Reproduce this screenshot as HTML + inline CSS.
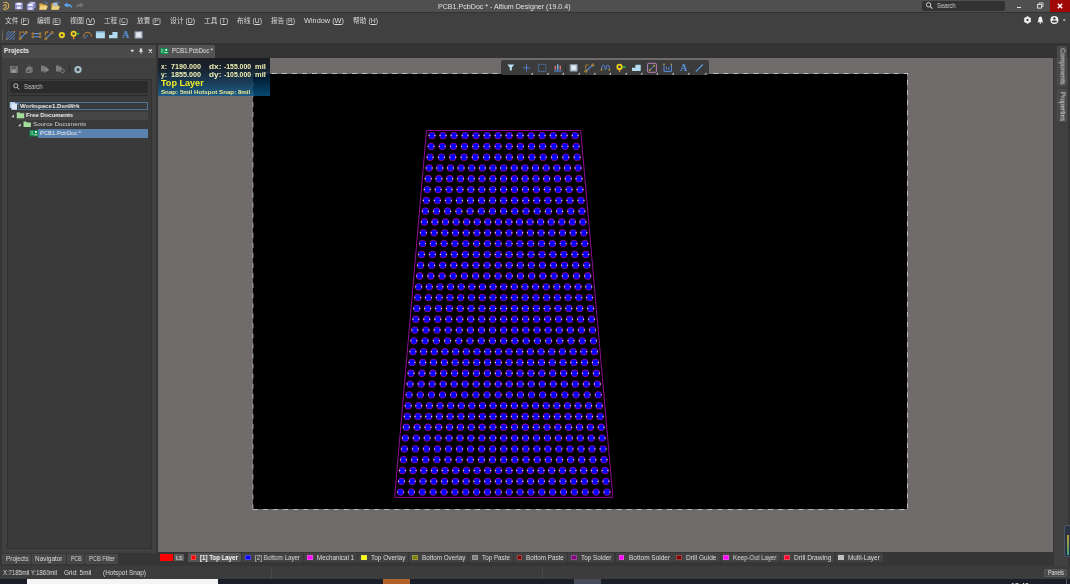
<!DOCTYPE html>
<html lang="zh-CN"><head><meta charset="utf-8"><title>PCB1.PcbDoc * - Altium Designer (19.0.4)</title>
<style>
html,body{margin:0;padding:0;background:#3a3a3a;}
body{width:1070px;height:584px;position:relative;overflow:hidden;font-family:"Liberation Sans","Noto Sans CJK SC",sans-serif;}
#app div,#app svg,#app span.t{position:absolute;display:block;}
#app span.t u{text-decoration-thickness:0.6px;text-underline-offset:0.6px;}
#app span.t{white-space:pre;transform-origin:0 50%;will-change:transform;}
</style></head><body><div id="app" style="position:absolute;left:0;top:0;width:1070px;height:584px;overflow:hidden">
<div style="left:0px;top:0px;width:1070px;height:12px;background:#4f4f4f;"></div>
<div style="left:0px;top:12px;width:1070px;height:1px;background:#333333;"></div>
<div style="left:0px;top:13px;width:1070px;height:30px;background:#404040;"></div>
<div style="left:0px;top:43px;width:1070px;height:541px;background:#363636;"></div>
<div style="left:2px;top:58px;width:154px;height:495px;background:#404040;"></div>
<div style="left:157px;top:43px;width:913px;height:15px;background:#333333;"></div>
<div style="left:0px;top:43px;width:157px;height:2px;background:#333333;"></div>
<div style="left:156px;top:43px;width:2px;height:15px;background:#333333;"></div>
<div style="left:1054px;top:58px;width:14px;height:508px;background:#404040;"></div>
<div style="left:158px;top:58px;width:895px;height:494px;background:#6f6b6a;"></div>
<div style="left:253.4px;top:74px;width:653.6px;height:435px;background:#000000;"></div>
<svg style="left:0px;top:0px;" width="1070" height="584" viewBox="0 0 1070 584"><line x1="253" y1="73.5" x2="908" y2="73.5" stroke="#bdbdbd" stroke-width="1" stroke-dasharray="5 5.03" stroke-dashoffset="1.16"/><line x1="907.5" y1="73" x2="907.5" y2="510" stroke="#bdbdbd" stroke-width="1" stroke-dasharray="5 5.08" stroke-dashoffset="3"/><line x1="253" y1="509.5" x2="908" y2="509.5" stroke="#b8b8b8" stroke-width="1" stroke-dasharray="5 5.1" stroke-dashoffset="0.1"/><line x1="252.9" y1="73" x2="252.9" y2="510" stroke="#a8a8a8" stroke-width="1" stroke-dasharray="5 5.06" stroke-dashoffset="1.1"/></svg>
<div style="left:922px;top:0.5px;width:83px;height:10.5px;background:#323232;border-radius:2px;"></div>
<svg style="left:925px;top:1px;" width="9" height="9" viewBox="0 0 9 9"><circle cx="3.6" cy="3.8" r="2.2" fill="none" stroke="#d0d0d0" stroke-width="1"/><path d="M5.2 5.4 L7.2 7.6" stroke="#d0d0d0" stroke-width="1.1"/></svg>
<div style="left:1017px;top:7px;width:4px;height:1.2px;background:#e8e8e8;"></div>
<svg style="left:1035px;top:1px;" width="10" height="10" viewBox="0 0 10 10"><rect x="2.5" y="3.5" width="4" height="3.6" fill="none" stroke="#e0e0e0" stroke-width="0.9"/><path d="M4 3.2 V2 H8 V5.6 H6.8" fill="none" stroke="#e0e0e0" stroke-width="0.9"/></svg>
<div style="left:1050px;top:0px;width:20px;height:12.2px;background:#a00808;"></div>
<svg style="left:1055px;top:1px;" width="10" height="10" viewBox="0 0 10 10"><path d="M2.8 2.8 L7.2 7.2 M7.2 2.8 L2.8 7.2" stroke="#ffffff" stroke-width="1.4"/></svg>
<div style="left:2px;top:45px;width:154px;height:13px;background:#4a4a4a;"></div>
<div style="left:7px;top:78.5px;width:145px;height:470px;background:#3a3a3a;box-sizing:border-box;border:1px solid #313131;"></div>
<div style="left:10px;top:81px;width:138px;height:11.5px;background:#2b2b2b;border-radius:2px;"></div>
<svg style="left:12px;top:82px;" width="9" height="9" viewBox="0 0 9 9"><circle cx="3.8" cy="3.8" r="2.1" fill="none" stroke="#c8c8c8" stroke-width="0.9"/><path d="M5.3 5.4 L7.3 7.5" stroke="#c8c8c8" stroke-width="1"/></svg>
<div style="left:10px;top:95.3px;width:138px;height:0.8px;background:#2a2a2a;"></div>
<div style="left:18px;top:102.4px;width:130px;height:7.8px;background:#3a3a3a;box-sizing:border-box;border:0.8px solid #4e7298;"></div>
<div style="left:16px;top:111.6px;width:132px;height:8px;background:#454545;"></div>
<div style="left:38px;top:129px;width:110px;height:8.6px;background:#5a82ae;"></div>
<div style="left:2px;top:553.5px;width:29px;height:10px;background:#454545;box-sizing:border-box;border:0.5px solid #494949;border-radius:1px;"></div>
<div style="left:32px;top:553.5px;width:34px;height:10px;background:#454545;box-sizing:border-box;border:0.5px solid #494949;border-radius:1px;"></div>
<div style="left:67px;top:553.5px;width:16.5px;height:10px;background:#454545;box-sizing:border-box;border:0.5px solid #494949;border-radius:1px;"></div>
<div style="left:85px;top:553.5px;width:33px;height:10px;background:#454545;box-sizing:border-box;border:0.5px solid #494949;border-radius:1px;"></div>
<div style="left:158px;top:45px;width:57px;height:13.2px;background:#535353;border-radius:1.5px 1.5px 0 0;"></div>
<div style="left:158px;top:58.3px;width:112px;height:38px;background:linear-gradient(180deg,rgba(4,10,18,0.8) 0%,rgba(4,14,26,0.8) 22%,rgba(4,40,68,0.8) 55%,rgba(8,90,144,0.8) 100%);"></div>
<div style="left:1057px;top:46px;width:10px;height:40px;background:#474747;border-radius:1.5px;box-sizing:border-box;border:0.6px solid #505050;"></div>
<div style="left:1057px;top:89.4px;width:10px;height:33px;background:#474747;border-radius:1.5px;box-sizing:border-box;border:0.6px solid #505050;"></div>
<div style="left:159.8px;top:554.3px;width:13.4px;height:7px;background:#ff0000;"></div>
<div style="left:174px;top:554.3px;width:10px;height:7px;background:#5c5c5c;"></div>
<div style="left:187.6px;top:552.8px;width:53.80000000000001px;height:9.2px;background:#555555;border-radius:1px;"></div>
<div style="left:190.5px;top:554.5px;width:5.9px;height:5.6px;background:#ff0000;box-sizing:border-box;border:0.4px solid rgba(200,200,200,0.35);"></div>
<div style="left:242.2px;top:552.8px;width:61.19999999999999px;height:9.2px;background:#424242;border-radius:1px;"></div>
<div style="left:245.1px;top:554.5px;width:5.9px;height:5.6px;background:#0000ff;box-sizing:border-box;border:0.4px solid rgba(200,200,200,0.35);"></div>
<div style="left:304.2px;top:552.8px;width:53.19999999999999px;height:9.2px;background:#424242;border-radius:1px;"></div>
<div style="left:307.1px;top:554.5px;width:5.9px;height:5.6px;background:#ff00ff;box-sizing:border-box;border:0.4px solid rgba(200,200,200,0.35);"></div>
<div style="left:358.4px;top:552.8px;width:50.0px;height:9.2px;background:#424242;border-radius:1px;"></div>
<div style="left:361.3px;top:554.5px;width:5.9px;height:5.6px;background:#ffff00;box-sizing:border-box;border:0.4px solid rgba(200,200,200,0.35);"></div>
<div style="left:408.9px;top:552.8px;width:59.5px;height:9.2px;background:#424242;border-radius:1px;"></div>
<div style="left:411.8px;top:554.5px;width:5.9px;height:5.6px;background:#808000;box-sizing:border-box;border:0.4px solid rgba(200,200,200,0.35);"></div>
<div style="left:469.4px;top:552.8px;width:43.60000000000002px;height:9.2px;background:#424242;border-radius:1px;"></div>
<div style="left:472.3px;top:554.5px;width:5.9px;height:5.6px;background:#808080;box-sizing:border-box;border:0.4px solid rgba(200,200,200,0.35);"></div>
<div style="left:513.6px;top:552.8px;width:53.59999999999991px;height:9.2px;background:#424242;border-radius:1px;"></div>
<div style="left:516.5px;top:554.5px;width:5.9px;height:5.6px;background:#800000;box-sizing:border-box;border:0.4px solid rgba(200,200,200,0.35);"></div>
<div style="left:567.8000000000001px;top:552.8px;width:46.59999999999991px;height:9.2px;background:#424242;border-radius:1px;"></div>
<div style="left:570.7px;top:554.5px;width:5.9px;height:5.6px;background:#800080;box-sizing:border-box;border:0.4px solid rgba(200,200,200,0.35);"></div>
<div style="left:615.6px;top:552.8px;width:57.39999999999998px;height:9.2px;background:#424242;border-radius:1px;"></div>
<div style="left:618.5px;top:554.5px;width:5.9px;height:5.6px;background:#ff00ff;box-sizing:border-box;border:0.4px solid rgba(200,200,200,0.35);"></div>
<div style="left:673.2px;top:552.8px;width:46.59999999999991px;height:9.2px;background:#424242;border-radius:1px;"></div>
<div style="left:676.1px;top:554.5px;width:5.9px;height:5.6px;background:#800000;box-sizing:border-box;border:0.4px solid rgba(200,200,200,0.35);"></div>
<div style="left:720.5px;top:552.8px;width:59.69999999999993px;height:9.2px;background:#424242;border-radius:1px;"></div>
<div style="left:723.4px;top:554.5px;width:5.9px;height:5.6px;background:#ff00ff;box-sizing:border-box;border:0.4px solid rgba(200,200,200,0.35);"></div>
<div style="left:781.2px;top:552.8px;width:53.19999999999993px;height:9.2px;background:#424242;border-radius:1px;"></div>
<div style="left:784.1px;top:554.5px;width:5.9px;height:5.6px;background:#ff002a;box-sizing:border-box;border:0.4px solid rgba(200,200,200,0.35);"></div>
<div style="left:835.5px;top:552.8px;width:47.69999999999993px;height:9.2px;background:#424242;border-radius:1px;"></div>
<div style="left:838.4px;top:554.5px;width:5.9px;height:5.6px;background:#c0c0c0;box-sizing:border-box;border:0.4px solid rgba(200,200,200,0.35);"></div>
<div style="left:0px;top:565.6px;width:1070px;height:13.4px;background:#3c3c3c;"></div>
<div style="left:271px;top:567px;width:0.7px;height:11px;background:#4a4a4a;"></div>
<div style="left:541.5px;top:567px;width:0.7px;height:11px;background:#4a4a4a;"></div>
<div style="left:1044px;top:569.4px;width:22.5px;height:8px;background:#4a4a4a;border-radius:1.5px;box-sizing:border-box;border:0.6px solid #5a5a5a;"></div>
<div style="left:0px;top:578.8px;width:1070px;height:6px;background:#1b1d29;"></div>
<div style="left:27px;top:578.8px;width:191px;height:6px;background:#f4f4f4;"></div>
<div style="left:382.6px;top:578.8px;width:27.3px;height:6px;background:#b0622a;"></div>
<div style="left:573.8px;top:578.8px;width:27px;height:6px;background:#474a57;"></div>
<div style="left:1066px;top:578.8px;width:0.7px;height:6px;background:#5a5a66;"></div>
<div style="left:1064px;top:524.5px;width:8px;height:32px;background:#2c3444;border-radius:2px;box-sizing:border-box;border:0.7px solid #4a546a;"></div>
<div style="left:1066.8px;top:535px;width:1.8px;height:20px;background:linear-gradient(180deg,#b89a30,#7aa04a 60%,#2aa08a);"></div>
<svg style="left:0px;top:0px;" width="90" height="12" viewBox="0 0 90 12"><path d="M3.8 2.5 L6.6 2.3 L8.6 4.2 V7.6 L5.8 9.7 L3.8 9.3 M3.6 5.9 C4.4 4.1 6.4 4.2 6.4 6 C6.4 7.4 5.2 8.1 4 8.2" fill="none" stroke="#c2a254" stroke-width="1.15" stroke-linecap="round" stroke-linejoin="round"/><rect x="15" y="2.4" width="7.9" height="7" rx="0.6" fill="#8f8fd2"/><rect x="16.6" y="2.9" width="4.7" height="2.3" fill="#f4f4ff"/><rect x="16.9" y="6.6" width="4.1" height="2.4" fill="#e4e4fa"/><rect x="29" y="1.7" width="6.7" height="6.4" rx="0.5" fill="#8484c4"/><rect x="30.3" y="2.3" width="4" height="1.6" fill="#e0e0f4"/><rect x="26.9" y="3.4" width="7.2" height="6.9" rx="0.6" fill="#9494d8"/><rect x="28.3" y="3.9" width="4.4" height="2.1" fill="#f4f4ff"/><rect x="28.6" y="7.4" width="3.8" height="2.4" fill="#e4e4fa"/><path d="M39.3 3.6 H42.4 L43.2 4.6 H46.4 V9.6 H39.3 Z" fill="#d8a848"/><path d="M40.6 5.8 H47.9 L46.4 9.7 H39.3 Z" fill="#f0d080"/><path d="M43.6 2.6 C45 1.2 46.8 1.6 47 3.4 M47 3.6 L46 2.8 M47 3.6 L47.9 2.6" stroke="#5a86c8" stroke-width="0.8" fill="none"/><path d="M51.3 3.6 H54.4 L55.2 4.6 H58.4 V9.6 H51.3 Z" fill="#d8a848"/><rect x="53.2" y="2.6" width="4.4" height="4" fill="#a8bcdc"/><path d="M52.6 6.2 H60.1 L58.6 9.7 H51.3 Z" fill="#f0d080"/><path d="M56.6 2.4 C57.8 1.2 59.4 1.6 59.6 3.2" stroke="#5a86c8" stroke-width="0.8" fill="none"/><path d="M63.8 5 L67.4 2.4 V4 C70.6 3.8 72.4 5.8 72.2 8.6 C71.4 6.8 69.8 6 67.4 6.2 V7.8 Z" fill="#5aa0e8"/><path d="M83.8 5 L80.2 2.4 V4 C77.4 3.8 75.6 5.8 75.8 8.6 C76.6 6.8 78 6 80.2 6.2 V7.8 Z" fill="#747474"/></svg>
<svg style="left:0px;top:0px;" width="1070" height="30" viewBox="0 0 1070 30"><path d="M1027.50 16.30 L1026.05 17.49 L1024.30 18.15 L1024.60 20.00 L1024.30 21.85 L1026.05 22.51 L1027.50 23.70 L1028.95 22.51 L1030.70 21.85 L1030.40 20.00 L1030.70 18.15 L1028.95 17.49 Z" fill="#f2f2f2" stroke="#f2f2f2" stroke-width="0.6" stroke-linejoin="round"/><circle cx="1027.5" cy="20.0" r="1.15" fill="#404040"/><path d="M1040.4 16.6 C1042.3 16.8 1042.3 19.4 1042.5 21 L1043.3 22.3 H1037.5 L1038.3 21 C1038.5 19.4 1038.5 16.8 1040.4 16.6 Z" fill="#f2f2f2"/><circle cx="1040.4" cy="23" r="0.8" fill="#f2f2f2"/><circle cx="1054.4" cy="20.1" r="4" fill="#f2f2f2"/><circle cx="1054.4" cy="18.4" r="1.2" fill="#404040"/><path d="M1051.6 21.4 C1052.6 22.8 1056.2 22.8 1057.2 21.4 C1056.6 20.2 1052.2 20.2 1051.6 21.4Z" fill="#404040"/><path d="M1062.6 19.4 H1065.8 L1064.2 21.2 Z" fill="#d0d0d0"/></svg>
<svg style="left:0px;top:0px;" width="160" height="44" viewBox="0 0 160 44"><rect x="2" y="30.5" width="0.9" height="9.8" fill="#6c6c6c"/><clipPath id="hc"><rect x="6" y="31" width="9" height="9"/></clipPath><g clip-path="url(#hc)"><path d="M0.0 40.4 L10.0 30.4" stroke="#5a8ee0" stroke-width="1"/><path d="M3.0 40.4 L13.0 30.4" stroke="#5a8ee0" stroke-width="1"/><path d="M6.0 40.4 L16.0 30.4" stroke="#5a8ee0" stroke-width="1"/><path d="M9.0 40.4 L19.0 30.4" stroke="#5a8ee0" stroke-width="1"/><path d="M12.0 40.4 L22.0 30.4" stroke="#5a8ee0" stroke-width="1"/></g><circle cx="6.6" cy="39" r="0.7" fill="#d89a2a"/><circle cx="14.4" cy="31.8" r="0.7" fill="#d89a2a"/><path d="M20 36.4 V32.2 H24.6" stroke="#d89a2a" stroke-width="1.2" fill="none" stroke-dasharray="1 0.8"/><path d="M20.4 38.4 L26 32.6" stroke="#5a8ee0" stroke-width="1.1"/><circle cx="20.2" cy="38.6" r="1.1" fill="none" stroke="#d89a2a" stroke-width="0.8"/><circle cx="26.2" cy="32.4" r="1.1" fill="none" stroke="#d89a2a" stroke-width="0.8"/><path d="M33.4 33.6 H39.6 M33.4 36.8 H39.6" stroke="#5a8ee0" stroke-width="1.1"/><circle cx="32.8" cy="33.6" r="0.9" fill="none" stroke="#d89a2a" stroke-width="0.8"/><circle cx="32.8" cy="36.8" r="0.9" fill="none" stroke="#d89a2a" stroke-width="0.8"/><circle cx="40.2" cy="33.6" r="0.9" fill="none" stroke="#d89a2a" stroke-width="0.8"/><circle cx="40.2" cy="36.8" r="0.9" fill="none" stroke="#d89a2a" stroke-width="0.8"/><path d="M45.4 35.4 V32 H49" stroke="#d89a2a" stroke-width="1.4" fill="none" stroke-dasharray="1 0.7"/><path d="M46 38.4 L52 32.8" stroke="#5a8ee0" stroke-width="1.1"/><circle cx="45.8" cy="38.6" r="1.1" fill="none" stroke="#d89a2a" stroke-width="0.8"/><circle cx="52.2" cy="32.6" r="1.1" fill="none" stroke="#d89a2a" stroke-width="0.8"/><circle cx="61.9" cy="35.1" r="2.15" fill="none" stroke="#f0d020" stroke-width="1.9"/><rect x="76" y="33" width="3.2" height="1.5" fill="#30c040"/><rect x="73" y="36" width="1.3" height="3.2" fill="#e88a30"/><circle cx="73.6" cy="33.7" r="2.15" fill="none" stroke="#f0d020" stroke-width="1.7"/><path d="M83.6 37.4 C83.2 31 91 30.6 91.6 36.4" stroke="#d08a3a" stroke-width="1" fill="none"/><path d="M84.4 38.8 L87.8 35" stroke="#5a8ee0" stroke-width="0.9"/><rect x="95.9" y="31.5" width="9" height="6.8" fill="#b4dcf0"/><rect x="95.9" y="31.5" width="9" height="1.1" fill="#7ab0d4"/><path d="M109 38.3 V35 H112.4 V32 H117.5 V38.3 Z" fill="#b4dcf0"/><rect x="134.4" y="31" width="8.4" height="7.8" rx="1.2" fill="#7c8898"/><rect x="135.5" y="32" width="6.2" height="5.8" fill="#c8d2dc"/><rect x="136.6" y="33" width="4" height="3.8" fill="#e4ecf2"/></svg>
<svg style="left:0px;top:0px;" width="180" height="140" viewBox="0 0 180 140"><path d="M130.4 49.8 H134 L132.2 52.4 Z" fill="#e0e0e0"/><path d="M139.8 48.4 H142.2 V51 H143 V51.8 H141.4 V53.8 H140.6 V51.8 H139 V51 H139.8 Z" fill="#e0e0e0"/><path d="M148.8 49.4 L152 52.6 M152 49.4 L148.8 52.6" stroke="#e8e8e8" stroke-width="1.1"/><rect x="10.1" y="66.1" width="7.7" height="7" rx="0.5" fill="#7c7c7c"/><rect x="11.6" y="66.6" width="4.6" height="2.2" fill="#5a5a5a"/><rect x="11.9" y="70.2" width="4" height="2.4" fill="#9a9a9a"/><path d="M28.6 65.2 L32.8 67.4 V72 L30 73 V68.6 Z" fill="#6c6c6c"/><path d="M25.8 68.4 L28.6 66.2 L31.2 68.4 V73.1 H25.8 Z" fill="#7c7c7c"/><rect x="27.2" y="69.8" width="2.4" height="2" fill="#4a4a4a"/><path d="M41 65.6 H43.6 L44.2 66.6 H46.6 V71.6 H41 Z" fill="#7c7c7c"/><circle cx="47" cy="69.8" r="1.7" fill="#8a8a8a"/><path d="M45.8 71 L44.2 73" stroke="#8a8a8a" stroke-width="0.9"/><path d="M56 65.6 H58.6 L59.2 66.6 H61.6 V71.6 H56 Z" fill="#7c7c7c"/><circle cx="62.4" cy="70.8" r="1.8" fill="#3a3a3a" stroke="#8a8a8a" stroke-width="0.9"/><rect x="69" y="65.1" width="0.8" height="8.4" fill="#2a2a2a"/><circle cx="78" cy="69.6" r="2.6" fill="none" stroke="#a8c0cc" stroke-width="2.1"/><rect x="9.8" y="102" width="5.4" height="6" fill="#a8c8ec"/><rect x="11.4" y="103.4" width="5.6" height="6.4" fill="#dce8f8"/><path d="M14.6 102.4 H18 V105 Z" fill="#7aa0d0"/><path d="M11.2 117.2 H14 V114.4 Z" fill="#d0d0d0"/><path d="M16.8 112.4 H19.6 L20.2 113.3 H24.2 V118.2 H16.8 Z" fill="#a4dc9c"/><path d="M18 126.2 H20.8 V123.4 Z" fill="#d0d0d0"/><path d="M23.5 121.5 H26.3 L26.9 122.4 H30.9 V127.1 H23.5 Z" fill="#a4dc9c"/><rect x="29.6" y="130" width="8.6" height="6.4" fill="#0c8a4c"/><rect x="30.6" y="130.8" width="0.8" height="4.2" fill="#7ac8a0"/><rect x="32" y="130.8" width="0.8" height="4.2" fill="#7ac8a0"/><rect x="35" y="131" width="1.8" height="1.8" fill="#ffffff"/><rect x="33.8" y="134.4" width="3.6" height="0.9" fill="#d8f0e0"/><rect x="160.2" y="48" width="8.2" height="6.2" fill="#0c8a4c"/><rect x="161.1" y="48.8" width="0.8" height="4" fill="#7ac8a0"/><rect x="162.5" y="48.8" width="0.8" height="4" fill="#7ac8a0"/><rect x="165.3" y="49" width="1.8" height="1.8" fill="#ffffff"/><rect x="164.2" y="52.2" width="3.4" height="0.9" fill="#d8f0e0"/></svg>
<div style="left:500.8px;top:60.2px;width:208px;height:15.2px;background:#3b3b3b;border-radius:2px;"></div>
<svg style="left:0px;top:0px;" width="720" height="80" viewBox="0 0 720 80"><path d="M507.3 64.6 H514.3 L511.8 67.6 V70.6 H509.8 V67.6 Z" fill="#b8e2f2"/><path d="M526.5 64.1 V71.5 M522.8 67.8 H530.2" stroke="#5a8ee0" stroke-width="0.75"/><rect x="538.3" y="64.3" width="7.6" height="7.2" fill="none" stroke="#5a8ee0" stroke-width="0.75" stroke-dasharray="1.5 0.8"/><rect x="554.6" y="65.8" width="1.3" height="3.8" fill="#e87a7a"/><rect x="557" y="64.4" width="1.5" height="5.2" fill="#78b4ec"/><rect x="559.6" y="65.8" width="1.3" height="3.8" fill="#e87a7a"/><rect x="554.2" y="70.4" width="7.2" height="1.1" fill="#5a8ee0"/><rect x="565.2" y="62.6" width="0.8" height="10.6" fill="#2c2c2c"/><rect x="569.6" y="63.9" width="8.2" height="7.8" rx="1.2" fill="#7c8c9c"/><rect x="570.7" y="64.9" width="6" height="5.8" fill="#c8d2dc"/><rect x="571.8" y="65.9" width="3.8" height="3.8" fill="#e4ecf2"/><path d="M585.6 68.4 V65 H588.6" stroke="#d89a2a" stroke-width="1.2" fill="none" stroke-dasharray="1 0.7"/><path d="M586 71 L592.6 65.2" stroke="#5a8ee0" stroke-width="1.1"/><circle cx="585.8" cy="71.2" r="1.1" fill="none" stroke="#d89a2a" stroke-width="0.8"/><circle cx="592.8" cy="65" r="1.1" fill="none" stroke="#d89a2a" stroke-width="0.8"/><path d="M601.6 69.6 C601.6 64 604.6 64 604.8 67.4 C605 70.4 606.2 70.4 606.4 67.4 C606.6 64 609.4 64 609.4 69.6" stroke="#5a8ee0" stroke-width="1" fill="none"/><circle cx="601.4" cy="69.8" r="0.9" fill="#d89a2a"/><circle cx="609.4" cy="69.8" r="0.9" fill="#d89a2a"/><rect x="622" y="66.2" width="3.6" height="1.5" fill="#30c040"/><rect x="618.9" y="69.2" width="1.3" height="3" fill="#e88a30"/><circle cx="619.5" cy="66.9" r="2.2" fill="none" stroke="#f0d020" stroke-width="1.8"/><path d="M632 71 V67.8 H635.4 V64.7 H640.7 V71 Z" fill="#b4dcf0"/><rect x="647.6" y="63.3" width="8.8" height="9" rx="1" fill="none" stroke="#c48cc4" stroke-width="0.9"/><path d="M649.8 70 L654.2 65.6" stroke="#5a8ee0" stroke-width="1"/><circle cx="649.8" cy="70" r="0.9" fill="#d89a2a"/><circle cx="654.2" cy="65.6" r="0.9" fill="#d89a2a"/><path d="M664 64.4 V71.4 H671.4 V64.4" stroke="#5a8ee0" stroke-width="1" fill="none"/><path d="M666.6 66.6 V70 M668.8 66.6 V70" stroke="#5a8ee0" stroke-width="0.8"/><circle cx="664" cy="64.2" r="0.8" fill="#d89a2a"/><circle cx="671.4" cy="64.2" r="0.8" fill="#d89a2a"/><path d="M695.8 71.6 L702.8 64.5" stroke="#5a9ae8" stroke-width="1.2"/><path d="M532.8 74.4 H530.8 L532.8 72.4 Z" fill="#e4e4e4"/><path d="M548.5 74.4 H546.5 L548.5 72.4 Z" fill="#e4e4e4"/><path d="M564 74.4 H562 L564 72.4 Z" fill="#e4e4e4"/><path d="M579.8 74.4 H577.8 L579.8 72.4 Z" fill="#e4e4e4"/><path d="M595.4 74.4 H593.4 L595.4 72.4 Z" fill="#e4e4e4"/><path d="M611 74.4 H609 L611 72.4 Z" fill="#e4e4e4"/><path d="M626.8 74.4 H624.8 L626.8 72.4 Z" fill="#e4e4e4"/><path d="M642.4 74.4 H640.4 L642.4 72.4 Z" fill="#e4e4e4"/><path d="M658 74.4 H656 L658 72.4 Z" fill="#e4e4e4"/><path d="M673.8 74.4 H671.8 L673.8 72.4 Z" fill="#e4e4e4"/><path d="M689.4 74.4 H687.4 L689.4 72.4 Z" fill="#e4e4e4"/><path d="M706.4 74.4 H704.4 L706.4 72.4 Z" fill="#e4e4e4"/></svg>
<svg style="left:0px;top:0px;" width="1070" height="584" viewBox="0 0 1070 584"><path d="M426.5 130.5 L580.7 130.5 L612.9 497.4 L394.6 497.4 Z" fill="none" stroke="#900a94" stroke-width="1"/><g stroke="#8c08a0" stroke-width="7.30" stroke-linecap="round"><line x1="432.00" y1="135.55" x2="575.22" y2="135.55" stroke-dasharray="0 11.0150"/><line x1="431.05" y1="146.35" x2="576.18" y2="146.35" stroke-dasharray="0 11.1622"/><line x1="430.10" y1="157.16" x2="577.14" y2="157.16" stroke-dasharray="0 11.3095"/><line x1="429.15" y1="167.96" x2="578.10" y2="167.96" stroke-dasharray="0 10.6384"/><line x1="428.19" y1="178.77" x2="579.07" y2="178.77" stroke-dasharray="0 10.7751"/><line x1="427.24" y1="189.57" x2="580.03" y2="189.57" stroke-dasharray="0 10.9118"/><line x1="426.29" y1="200.38" x2="580.99" y2="200.38" stroke-dasharray="0 11.0485"/><line x1="425.34" y1="211.18" x2="581.95" y2="211.18" stroke-dasharray="0 11.1853"/><line x1="424.38" y1="221.99" x2="582.91" y2="221.99" stroke-dasharray="0 10.5672"/><line x1="423.43" y1="232.79" x2="583.87" y2="232.79" stroke-dasharray="0 10.6948"/><line x1="422.48" y1="243.60" x2="584.83" y2="243.60" stroke-dasharray="0 10.8224"/><line x1="421.53" y1="254.40" x2="585.80" y2="254.40" stroke-dasharray="0 10.9500"/><line x1="420.57" y1="265.20" x2="586.76" y2="265.20" stroke-dasharray="0 11.0776"/><line x1="419.62" y1="276.01" x2="587.72" y2="276.01" stroke-dasharray="0 11.2052"/><line x1="418.67" y1="286.81" x2="588.68" y2="286.81" stroke-dasharray="0 10.6245"/><line x1="417.71" y1="297.62" x2="589.64" y2="297.62" stroke-dasharray="0 10.7442"/><line x1="416.76" y1="308.42" x2="590.60" y2="308.42" stroke-dasharray="0 10.8638"/><line x1="415.81" y1="319.23" x2="591.56" y2="319.23" stroke-dasharray="0 10.9834"/><line x1="414.86" y1="330.03" x2="592.53" y2="330.03" stroke-dasharray="0 11.1031"/><line x1="413.90" y1="340.84" x2="593.49" y2="340.84" stroke-dasharray="0 11.2227"/><line x1="412.95" y1="351.64" x2="594.45" y2="351.64" stroke-dasharray="0 10.6751"/><line x1="412.00" y1="362.45" x2="595.41" y2="362.45" stroke-dasharray="0 10.7877"/><line x1="411.05" y1="373.25" x2="596.37" y2="373.25" stroke-dasharray="0 10.9003"/><line x1="410.09" y1="384.05" x2="597.33" y2="384.05" stroke-dasharray="0 11.0129"/><line x1="409.14" y1="394.86" x2="598.30" y2="394.86" stroke-dasharray="0 11.1255"/><line x1="408.19" y1="405.66" x2="599.26" y2="405.66" stroke-dasharray="0 10.6138"/><line x1="407.24" y1="416.47" x2="600.22" y2="416.47" stroke-dasharray="0 10.7201"/><line x1="406.28" y1="427.27" x2="601.18" y2="427.27" stroke-dasharray="0 10.8265"/><line x1="405.33" y1="438.08" x2="602.14" y2="438.08" stroke-dasharray="0 10.9328"/><line x1="404.38" y1="448.88" x2="603.10" y2="448.88" stroke-dasharray="0 11.0391"/><line x1="403.43" y1="459.69" x2="604.06" y2="459.69" stroke-dasharray="0 11.1455"/><line x1="402.47" y1="470.49" x2="605.03" y2="470.49" stroke-dasharray="0 10.6596"/><line x1="401.52" y1="481.30" x2="605.99" y2="481.30" stroke-dasharray="0 10.7604"/><line x1="400.57" y1="492.10" x2="606.95" y2="492.10" stroke-dasharray="0 10.8611"/></g><g stroke="#0000ff" stroke-width="5.70" stroke-linecap="round"><line x1="432.00" y1="135.55" x2="575.22" y2="135.55" stroke-dasharray="0 11.0150"/><line x1="431.05" y1="146.35" x2="576.18" y2="146.35" stroke-dasharray="0 11.1622"/><line x1="430.10" y1="157.16" x2="577.14" y2="157.16" stroke-dasharray="0 11.3095"/><line x1="429.15" y1="167.96" x2="578.10" y2="167.96" stroke-dasharray="0 10.6384"/><line x1="428.19" y1="178.77" x2="579.07" y2="178.77" stroke-dasharray="0 10.7751"/><line x1="427.24" y1="189.57" x2="580.03" y2="189.57" stroke-dasharray="0 10.9118"/><line x1="426.29" y1="200.38" x2="580.99" y2="200.38" stroke-dasharray="0 11.0485"/><line x1="425.34" y1="211.18" x2="581.95" y2="211.18" stroke-dasharray="0 11.1853"/><line x1="424.38" y1="221.99" x2="582.91" y2="221.99" stroke-dasharray="0 10.5672"/><line x1="423.43" y1="232.79" x2="583.87" y2="232.79" stroke-dasharray="0 10.6948"/><line x1="422.48" y1="243.60" x2="584.83" y2="243.60" stroke-dasharray="0 10.8224"/><line x1="421.53" y1="254.40" x2="585.80" y2="254.40" stroke-dasharray="0 10.9500"/><line x1="420.57" y1="265.20" x2="586.76" y2="265.20" stroke-dasharray="0 11.0776"/><line x1="419.62" y1="276.01" x2="587.72" y2="276.01" stroke-dasharray="0 11.2052"/><line x1="418.67" y1="286.81" x2="588.68" y2="286.81" stroke-dasharray="0 10.6245"/><line x1="417.71" y1="297.62" x2="589.64" y2="297.62" stroke-dasharray="0 10.7442"/><line x1="416.76" y1="308.42" x2="590.60" y2="308.42" stroke-dasharray="0 10.8638"/><line x1="415.81" y1="319.23" x2="591.56" y2="319.23" stroke-dasharray="0 10.9834"/><line x1="414.86" y1="330.03" x2="592.53" y2="330.03" stroke-dasharray="0 11.1031"/><line x1="413.90" y1="340.84" x2="593.49" y2="340.84" stroke-dasharray="0 11.2227"/><line x1="412.95" y1="351.64" x2="594.45" y2="351.64" stroke-dasharray="0 10.6751"/><line x1="412.00" y1="362.45" x2="595.41" y2="362.45" stroke-dasharray="0 10.7877"/><line x1="411.05" y1="373.25" x2="596.37" y2="373.25" stroke-dasharray="0 10.9003"/><line x1="410.09" y1="384.05" x2="597.33" y2="384.05" stroke-dasharray="0 11.0129"/><line x1="409.14" y1="394.86" x2="598.30" y2="394.86" stroke-dasharray="0 11.1255"/><line x1="408.19" y1="405.66" x2="599.26" y2="405.66" stroke-dasharray="0 10.6138"/><line x1="407.24" y1="416.47" x2="600.22" y2="416.47" stroke-dasharray="0 10.7201"/><line x1="406.28" y1="427.27" x2="601.18" y2="427.27" stroke-dasharray="0 10.8265"/><line x1="405.33" y1="438.08" x2="602.14" y2="438.08" stroke-dasharray="0 10.9328"/><line x1="404.38" y1="448.88" x2="603.10" y2="448.88" stroke-dasharray="0 11.0391"/><line x1="403.43" y1="459.69" x2="604.06" y2="459.69" stroke-dasharray="0 11.1455"/><line x1="402.47" y1="470.49" x2="605.03" y2="470.49" stroke-dasharray="0 10.6596"/><line x1="401.52" y1="481.30" x2="605.99" y2="481.30" stroke-dasharray="0 10.7604"/><line x1="400.57" y1="492.10" x2="606.95" y2="492.10" stroke-dasharray="0 10.8611"/></g><g stroke="#d8d4b0" stroke-width="1.44" stroke-linecap="round"><line x1="429.10" y1="135.55" x2="572.32" y2="135.55" stroke-dasharray="0 11.0150"/><line x1="434.90" y1="135.55" x2="578.12" y2="135.55" stroke-dasharray="0 11.0150"/><line x1="428.15" y1="146.35" x2="573.28" y2="146.35" stroke-dasharray="0 11.1622"/><line x1="433.95" y1="146.35" x2="579.08" y2="146.35" stroke-dasharray="0 11.1622"/><line x1="427.20" y1="157.16" x2="574.24" y2="157.16" stroke-dasharray="0 11.3095"/><line x1="433.00" y1="157.16" x2="580.04" y2="157.16" stroke-dasharray="0 11.3095"/><line x1="426.25" y1="167.96" x2="575.20" y2="167.96" stroke-dasharray="0 10.6384"/><line x1="432.05" y1="167.96" x2="581.00" y2="167.96" stroke-dasharray="0 10.6384"/><line x1="425.29" y1="178.77" x2="576.17" y2="178.77" stroke-dasharray="0 10.7751"/><line x1="431.09" y1="178.77" x2="581.97" y2="178.77" stroke-dasharray="0 10.7751"/><line x1="424.34" y1="189.57" x2="577.13" y2="189.57" stroke-dasharray="0 10.9118"/><line x1="430.14" y1="189.57" x2="582.93" y2="189.57" stroke-dasharray="0 10.9118"/><line x1="423.39" y1="200.38" x2="578.09" y2="200.38" stroke-dasharray="0 11.0485"/><line x1="429.19" y1="200.38" x2="583.89" y2="200.38" stroke-dasharray="0 11.0485"/><line x1="422.44" y1="211.18" x2="579.05" y2="211.18" stroke-dasharray="0 11.1853"/><line x1="428.24" y1="211.18" x2="584.85" y2="211.18" stroke-dasharray="0 11.1853"/><line x1="421.48" y1="221.99" x2="580.01" y2="221.99" stroke-dasharray="0 10.5672"/><line x1="427.28" y1="221.99" x2="585.81" y2="221.99" stroke-dasharray="0 10.5672"/><line x1="420.53" y1="232.79" x2="580.97" y2="232.79" stroke-dasharray="0 10.6948"/><line x1="426.33" y1="232.79" x2="586.77" y2="232.79" stroke-dasharray="0 10.6948"/><line x1="419.58" y1="243.60" x2="581.93" y2="243.60" stroke-dasharray="0 10.8224"/><line x1="425.38" y1="243.60" x2="587.73" y2="243.60" stroke-dasharray="0 10.8224"/><line x1="418.63" y1="254.40" x2="582.90" y2="254.40" stroke-dasharray="0 10.9500"/><line x1="424.43" y1="254.40" x2="588.70" y2="254.40" stroke-dasharray="0 10.9500"/><line x1="417.67" y1="265.20" x2="583.86" y2="265.20" stroke-dasharray="0 11.0776"/><line x1="423.47" y1="265.20" x2="589.66" y2="265.20" stroke-dasharray="0 11.0776"/><line x1="416.72" y1="276.01" x2="584.82" y2="276.01" stroke-dasharray="0 11.2052"/><line x1="422.52" y1="276.01" x2="590.62" y2="276.01" stroke-dasharray="0 11.2052"/><line x1="415.77" y1="286.81" x2="585.78" y2="286.81" stroke-dasharray="0 10.6245"/><line x1="421.57" y1="286.81" x2="591.58" y2="286.81" stroke-dasharray="0 10.6245"/><line x1="414.81" y1="297.62" x2="586.74" y2="297.62" stroke-dasharray="0 10.7442"/><line x1="420.61" y1="297.62" x2="592.54" y2="297.62" stroke-dasharray="0 10.7442"/><line x1="413.86" y1="308.42" x2="587.70" y2="308.42" stroke-dasharray="0 10.8638"/><line x1="419.66" y1="308.42" x2="593.50" y2="308.42" stroke-dasharray="0 10.8638"/><line x1="412.91" y1="319.23" x2="588.66" y2="319.23" stroke-dasharray="0 10.9834"/><line x1="418.71" y1="319.23" x2="594.46" y2="319.23" stroke-dasharray="0 10.9834"/><line x1="411.96" y1="330.03" x2="589.63" y2="330.03" stroke-dasharray="0 11.1031"/><line x1="417.76" y1="330.03" x2="595.43" y2="330.03" stroke-dasharray="0 11.1031"/><line x1="411.00" y1="340.84" x2="590.59" y2="340.84" stroke-dasharray="0 11.2227"/><line x1="416.80" y1="340.84" x2="596.39" y2="340.84" stroke-dasharray="0 11.2227"/><line x1="410.05" y1="351.64" x2="591.55" y2="351.64" stroke-dasharray="0 10.6751"/><line x1="415.85" y1="351.64" x2="597.35" y2="351.64" stroke-dasharray="0 10.6751"/><line x1="409.10" y1="362.45" x2="592.51" y2="362.45" stroke-dasharray="0 10.7877"/><line x1="414.90" y1="362.45" x2="598.31" y2="362.45" stroke-dasharray="0 10.7877"/><line x1="408.15" y1="373.25" x2="593.47" y2="373.25" stroke-dasharray="0 10.9003"/><line x1="413.95" y1="373.25" x2="599.27" y2="373.25" stroke-dasharray="0 10.9003"/><line x1="407.19" y1="384.05" x2="594.43" y2="384.05" stroke-dasharray="0 11.0129"/><line x1="412.99" y1="384.05" x2="600.23" y2="384.05" stroke-dasharray="0 11.0129"/><line x1="406.24" y1="394.86" x2="595.40" y2="394.86" stroke-dasharray="0 11.1255"/><line x1="412.04" y1="394.86" x2="601.20" y2="394.86" stroke-dasharray="0 11.1255"/><line x1="405.29" y1="405.66" x2="596.36" y2="405.66" stroke-dasharray="0 10.6138"/><line x1="411.09" y1="405.66" x2="602.16" y2="405.66" stroke-dasharray="0 10.6138"/><line x1="404.34" y1="416.47" x2="597.32" y2="416.47" stroke-dasharray="0 10.7201"/><line x1="410.14" y1="416.47" x2="603.12" y2="416.47" stroke-dasharray="0 10.7201"/><line x1="403.38" y1="427.27" x2="598.28" y2="427.27" stroke-dasharray="0 10.8265"/><line x1="409.18" y1="427.27" x2="604.08" y2="427.27" stroke-dasharray="0 10.8265"/><line x1="402.43" y1="438.08" x2="599.24" y2="438.08" stroke-dasharray="0 10.9328"/><line x1="408.23" y1="438.08" x2="605.04" y2="438.08" stroke-dasharray="0 10.9328"/><line x1="401.48" y1="448.88" x2="600.20" y2="448.88" stroke-dasharray="0 11.0391"/><line x1="407.28" y1="448.88" x2="606.00" y2="448.88" stroke-dasharray="0 11.0391"/><line x1="400.53" y1="459.69" x2="601.16" y2="459.69" stroke-dasharray="0 11.1455"/><line x1="406.33" y1="459.69" x2="606.96" y2="459.69" stroke-dasharray="0 11.1455"/><line x1="399.57" y1="470.49" x2="602.13" y2="470.49" stroke-dasharray="0 10.6596"/><line x1="405.37" y1="470.49" x2="607.93" y2="470.49" stroke-dasharray="0 10.6596"/><line x1="398.62" y1="481.30" x2="603.09" y2="481.30" stroke-dasharray="0 10.7604"/><line x1="404.42" y1="481.30" x2="608.89" y2="481.30" stroke-dasharray="0 10.7604"/><line x1="397.67" y1="492.10" x2="604.05" y2="492.10" stroke-dasharray="0 10.8611"/><line x1="403.47" y1="492.10" x2="609.85" y2="492.10" stroke-dasharray="0 10.8611"/></g></svg>
<span id="t0" class="t" style="left:438px;top:1.88px;font-size:6.6px;line-height:9.24px;color:#e0e0e0;transform:scaleX(1.0768);">PCB1.PcbDoc * - Altium Designer (19.0.4)</span>
<span id="t1" class="t" style="left:936.5px;top:1.03px;font-size:6.6px;line-height:9.24px;color:#d0d0d0;transform:scaleX(0.8849);">Search</span>
<span id="t2" class="t" style="left:5px;top:16.04px;font-size:6.8px;line-height:9.52px;color:#dcdcdc;transform:scaleX(0.9929);">文件 (<u>F</u>)</span>
<span id="t3" class="t" style="left:37px;top:16.04px;font-size:6.8px;line-height:9.52px;color:#dcdcdc;transform:scaleX(0.9771);">编辑 (<u>E</u>)</span>
<span id="t4" class="t" style="left:70px;top:16.04px;font-size:6.8px;line-height:9.52px;color:#dcdcdc;transform:scaleX(1.0178);">视图 (<u>V</u>)</span>
<span id="t5" class="t" style="left:104px;top:16.04px;font-size:6.8px;line-height:9.52px;color:#dcdcdc;transform:scaleX(0.9624);">工程 (<u>C</u>)</span>
<span id="t6" class="t" style="left:137px;top:16.04px;font-size:6.8px;line-height:9.52px;color:#dcdcdc;transform:scaleX(0.9771);">放置 (<u>P</u>)</span>
<span id="t7" class="t" style="left:170px;top:16.04px;font-size:6.8px;line-height:9.52px;color:#dcdcdc;transform:scaleX(1.0025);">设计 (<u>D</u>)</span>
<span id="t8" class="t" style="left:204px;top:16.04px;font-size:6.8px;line-height:9.52px;color:#dcdcdc;transform:scaleX(0.9929);">工具 (<u>T</u>)</span>
<span id="t9" class="t" style="left:237px;top:16.04px;font-size:6.8px;line-height:9.52px;color:#dcdcdc;transform:scaleX(1.0025);">布线 (<u>U</u>)</span>
<span id="t10" class="t" style="left:271px;top:16.04px;font-size:6.8px;line-height:9.52px;color:#dcdcdc;transform:scaleX(0.9624);">报告 (<u>R</u>)</span>
<span id="t11" class="t" style="left:304px;top:16.04px;font-size:6.8px;line-height:9.52px;color:#dcdcdc;transform:scaleX(1.0806);">Window (<u>W</u>)</span>
<span id="t12" class="t" style="left:353px;top:16.04px;font-size:6.8px;line-height:9.52px;color:#dcdcdc;transform:scaleX(1.0025);">帮助 (<u>H</u>)</span>
<span id="t13" class="t" style="left:4px;top:46.04px;font-size:6.8px;line-height:9.52px;color:#f0f0f0;font-weight:bold;transform:scaleX(0.9319);">Projects</span>
<span id="t14" class="t" style="left:24px;top:81.78px;font-size:6.6px;line-height:9.24px;color:#c8c8c8;transform:scaleX(0.8849);">Search</span>
<span id="t15" class="t" style="left:19.5px;top:102.26px;font-size:6.2px;line-height:8.68px;color:#f0f0f0;font-weight:bold;transform:scaleX(0.9702);">Workspace1.DsnWrk</span>
<span id="t16" class="t" style="left:25.5px;top:111.36px;font-size:6.2px;line-height:8.68px;color:#f0f0f0;font-weight:bold;transform:scaleX(0.9694);">Free Documents</span>
<span id="t17" class="t" style="left:33px;top:120.36px;font-size:6.2px;line-height:8.68px;color:#d0d0d0;transform:scaleX(1.0071);">Source Documents</span>
<span id="t18" class="t" style="left:39.5px;top:129.16px;font-size:6.2px;line-height:8.68px;color:#f4f4f4;transform:scaleX(0.9385);">PCB1.PcbDoc *</span>
<span id="t19" class="t" style="left:5.5px;top:555.02px;font-size:6.4px;line-height:8.96px;color:#dcdcdc;transform:scaleX(0.9743);">Projects</span>
<span id="t20" class="t" style="left:35px;top:555.02px;font-size:6.4px;line-height:8.96px;color:#dcdcdc;transform:scaleX(1.0051);">Navigator</span>
<span id="t21" class="t" style="left:70.5px;top:555.02px;font-size:6.4px;line-height:8.96px;color:#dcdcdc;transform:scaleX(0.7990);">PCB</span>
<span id="t22" class="t" style="left:88.5px;top:555.02px;font-size:6.4px;line-height:8.96px;color:#dcdcdc;transform:scaleX(0.8927);">PCB Filter</span>
<span id="t23" class="t" style="left:172px;top:46.92px;font-size:6.4px;line-height:8.96px;color:#e6e6e6;transform:scaleX(0.9089);">PCB1.PcbDoc *</span>
<span id="t24" class="t" style="left:160.7px;top:61.73px;font-size:6.6px;line-height:9.24px;color:#f2f0b4;font-weight:bold;transform:scaleX(0.9872);">x:</span>
<span id="t25" class="t" style="left:171px;top:61.73px;font-size:6.6px;line-height:9.24px;color:#f2f0b4;font-weight:bold;transform:scaleX(1.0903);">7190.000</span>
<span id="t26" class="t" style="left:208.6px;top:61.73px;font-size:6.6px;line-height:9.24px;color:#f2f0b4;font-weight:bold;transform:scaleX(1.2537);">dx:</span>
<span id="t27" class="t" style="left:224px;top:61.73px;font-size:6.6px;line-height:9.24px;color:#f2f0b4;font-weight:bold;transform:scaleX(1.0372);">-155.000</span>
<span id="t28" class="t" style="left:255px;top:61.73px;font-size:6.6px;line-height:9.24px;color:#f2f0b4;font-weight:bold;transform:scaleX(1.1331);">mil</span>
<span id="t29" class="t" style="left:160.7px;top:69.68px;font-size:6.6px;line-height:9.24px;color:#f2f0b4;font-weight:bold;transform:scaleX(0.9872);">y:</span>
<span id="t30" class="t" style="left:171px;top:69.68px;font-size:6.6px;line-height:9.24px;color:#f2f0b4;font-weight:bold;transform:scaleX(1.0903);">1855.000</span>
<span id="t31" class="t" style="left:208.6px;top:69.68px;font-size:6.6px;line-height:9.24px;color:#f2f0b4;font-weight:bold;transform:scaleX(1.2537);">dy:</span>
<span id="t32" class="t" style="left:224px;top:69.68px;font-size:6.6px;line-height:9.24px;color:#f2f0b4;font-weight:bold;transform:scaleX(1.0372);">-105.000</span>
<span id="t33" class="t" style="left:255px;top:69.68px;font-size:6.6px;line-height:9.24px;color:#f2f0b4;font-weight:bold;transform:scaleX(1.1331);">mil</span>
<span id="t34" class="t" style="left:160.7px;top:76.9px;font-size:9px;line-height:12.6px;color:#f4ee2a;font-weight:bold;transform:scaleX(1.0084);">Top Layer</span>
<span id="t35" class="t" style="left:160.7px;top:89.28px;font-size:5.6px;line-height:7.84px;color:#ece890;font-weight:bold;transform:scaleX(1.1050);">Snap: 5mil Hotspot Snap: 8mil</span>
<span id="t36" class="t" style="left:1061.7px;top:61.72px;font-size:6.4px;line-height:8.96px;color:#e0e0e0;transform-origin:0 50%;transform:rotate(90deg) translateX(-50%);">Components</span>
<span id="t37" class="t" style="left:1061.7px;top:101.72px;font-size:6.4px;line-height:8.96px;color:#e0e0e0;transform-origin:0 50%;transform:rotate(90deg) translateX(-50%);">Properties</span>
<span id="t38" class="t" style="left:176px;top:554.52px;font-size:5.4px;line-height:7.56px;color:#cfcfcf;font-weight:bold;transform:scaleX(0.9288);">LS</span>
<span id="t39" class="t" style="left:200px;top:553.74px;font-size:6.3px;line-height:8.82px;color:#ffffff;font-weight:bold;transform:scaleX(0.9724);">[1] Top Layer</span>
<span id="t40" class="t" style="left:255px;top:553.74px;font-size:6.3px;line-height:8.82px;color:#dcdcdc;transform:scaleX(0.9740);">[2] Bottom Layer</span>
<span id="t41" class="t" style="left:317px;top:553.74px;font-size:6.3px;line-height:8.82px;color:#dcdcdc;transform:scaleX(0.9971);">Mechanical 1</span>
<span id="t42" class="t" style="left:370.6px;top:553.74px;font-size:6.3px;line-height:8.82px;color:#dcdcdc;transform:scaleX(1.0235);">Top Overlay</span>
<span id="t43" class="t" style="left:421.8px;top:553.74px;font-size:6.3px;line-height:8.82px;color:#dcdcdc;transform:scaleX(0.9952);">Bottom Overlay</span>
<span id="t44" class="t" style="left:481.6px;top:553.74px;font-size:6.3px;line-height:8.82px;color:#dcdcdc;">Top Paste</span>
<span id="t45" class="t" style="left:526.4px;top:553.74px;font-size:6.3px;line-height:8.82px;color:#dcdcdc;transform:scaleX(0.9891);">Bottom Paste</span>
<span id="t46" class="t" style="left:580.7px;top:553.74px;font-size:6.3px;line-height:8.82px;color:#dcdcdc;transform:scaleX(1.0063);">Top Solder</span>
<span id="t47" class="t" style="left:628.5px;top:553.74px;font-size:6.3px;line-height:8.82px;color:#dcdcdc;transform:scaleX(1.0299);">Bottom Solder</span>
<span id="t48" class="t" style="left:686px;top:553.74px;font-size:6.3px;line-height:8.82px;color:#dcdcdc;transform:scaleX(1.0338);">Drill Guide</span>
<span id="t49" class="t" style="left:733.2px;top:553.74px;font-size:6.3px;line-height:8.82px;color:#dcdcdc;transform:scaleX(0.9805);">Keep-Out Layer</span>
<span id="t50" class="t" style="left:793.7px;top:553.74px;font-size:6.3px;line-height:8.82px;color:#dcdcdc;transform:scaleX(1.0452);">Drill Drawing</span>
<span id="t51" class="t" style="left:848px;top:553.74px;font-size:6.3px;line-height:8.82px;color:#dcdcdc;transform:scaleX(1.0207);">Multi-Layer</span>
<span id="t52" class="t" style="left:3px;top:568.72px;font-size:6.4px;line-height:8.96px;color:#dcdcdc;transform:scaleX(0.9285);">X:7185mil Y:1860mil</span>
<span id="t53" class="t" style="left:64px;top:568.72px;font-size:6.4px;line-height:8.96px;color:#dcdcdc;transform:scaleX(0.9874);">Grid: 5mil</span>
<span id="t54" class="t" style="left:103px;top:568.72px;font-size:6.4px;line-height:8.96px;color:#dcdcdc;">(Hotspot Snap)</span>
<span id="t55" class="t" style="left:1047.5px;top:569.19px;font-size:6.3px;line-height:8.82px;color:#e6e6e6;transform:scaleX(0.8305);">Panels</span>
<span id="t56" class="t" style="left:1011px;top:581.18px;font-size:6.6px;line-height:9.24px;color:#ffffff;transform:scaleX(1.0899);">18:40</span>
<span id="t57" class="t" style="left:122.4px;top:26.96px;font-size:11.2px;line-height:15.68px;color:#5a9ae4;font-weight:bold;transform:scaleX(0.9019);font-family:'Liberation Serif',serif;">A</span>
<span id="t58" class="t" style="left:679.7px;top:59.96px;font-size:11.2px;line-height:15.68px;color:#5a9ae4;font-weight:bold;transform:scaleX(0.8896);font-family:'Liberation Serif',serif;">A</span>
</div></body></html>
